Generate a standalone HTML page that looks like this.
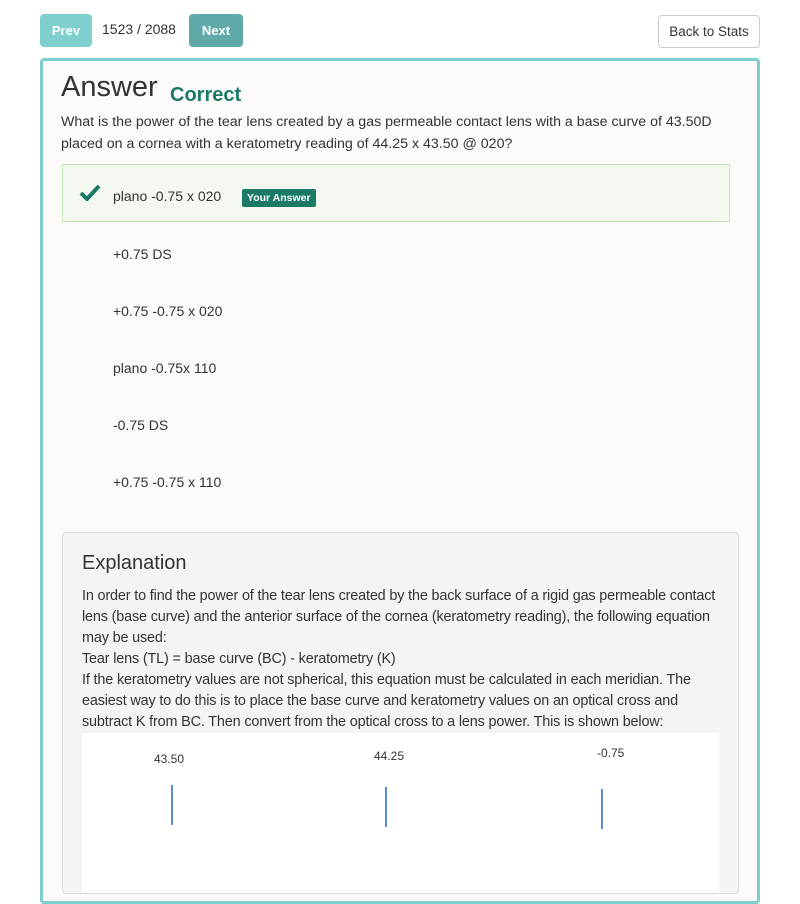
<!DOCTYPE html>
<html><head><style>
html,body{margin:0;width:800px;height:820px;overflow:hidden;background:#fff;font-family:"Liberation Sans",sans-serif;color:#333;}
.btn{position:absolute;border-radius:4px;font-size:13px;font-weight:bold;color:#fff;text-align:center;line-height:33px;}
.main{position:absolute;left:40px;top:58px;width:714px;height:840px;border:3px solid #7ccfcc;border-radius:4px;background:#fcfbf9;}
.a{position:absolute;font-size:14px;color:#333;white-space:nowrap;}
</style></head><body>
<div class="btn" style="left:40px;top:14px;width:52px;height:33px;background:#7fcfcf;">Prev</div>
<div class="a" style="left:102px;top:21px;font-size:14px;">1523 / 2088</div>
<div class="btn" style="left:189px;top:14px;width:54px;height:33px;background:#5fa9a8;">Next</div>
<div style="position:absolute;left:658px;top:15px;width:100px;height:31px;border:1px solid #ccc;border-radius:4px;font-size:13.5px;line-height:31px;text-align:center;color:#333;">Back to Stats</div>
<div class="main">
<div class="a" style="left:18px;top:10px;font-size:29px;color:#333;">Answer</div>
<div class="a" style="left:127px;top:23px;font-size:20px;font-weight:bold;color:#1a7a66;">Correct</div>
<div class="a" style="left:18px;top:50px;line-height:22px;font-size:14.2px;">What is the power of the tear lens created by a gas permeable contact lens with a base curve of 43.50D<br>placed on a cornea with a keratometry reading of 44.25 x 43.50 @ 020?</div>
<div style="position:absolute;left:19px;top:103px;width:666px;height:56px;background:#f3f9f0;border:1px solid #c6e6be;"></div>
<svg style="position:absolute;left:36px;top:123px" width="22" height="17" viewBox="0 0 22 17"><path d="M2 9 L8 15 L20 2" fill="none" stroke="#1a7a66" stroke-width="4"/></svg>
<div class="a" style="left:70px;top:127px;">plano -0.75 x 020</div>
<div style="position:absolute;left:199px;top:128px;height:18px;padding:0 5px;background:#1a7a66;color:#fff;font-size:10.5px;font-weight:bold;line-height:18px;border-radius:2px;">Your Answer</div>
<div class="a" style="left:70px;top:185px;">+0.75 DS</div>
<div class="a" style="left:70px;top:242px;">+0.75 -0.75 x 020</div>
<div class="a" style="left:70px;top:299px;">plano -0.75x 110</div>
<div class="a" style="left:70px;top:356px;">-0.75 DS</div>
<div class="a" style="left:70px;top:413px;">+0.75 -0.75 x 110</div>
<div style="position:absolute;left:19px;top:471px;width:675px;height:360px;background:#f4f4f4;border:1px solid #ddd;border-radius:4px;">
<div class="a" style="left:19px;top:19px;font-size:20px;">Explanation</div>
<div class="a" style="left:19px;top:53px;line-height:21px;font-size:14.4px;letter-spacing:-0.15px;">In order to find the power of the tear lens created by the back surface of a rigid gas permeable contact<br>lens (base curve) and the anterior surface of the cornea (keratometry reading), the following equation<br>may be used:<br>Tear lens (TL) = base curve (BC) - keratometry (K)<br>If the keratometry values are not spherical, this equation must be calculated in each meridian. The<br>easiest way to do this is to place the base curve and keratometry values on an optical cross and<br>subtract K from BC. Then convert from the optical cross to a lens power. This is shown below:</div>
<div style="position:absolute;left:19px;top:200px;width:637px;height:160px;background:#fff;">
<div class="a" style="left:72px;top:19px;font-size:12px;">43.50</div>
<div class="a" style="left:292px;top:16px;font-size:12px;">44.25</div>
<div class="a" style="left:515px;top:13px;font-size:12px;">-0.75</div>
<div style="position:absolute;left:89px;top:52px;width:2px;height:40px;background:#5b8ed0;"></div>
<div style="position:absolute;left:303px;top:54px;width:2px;height:40px;background:#5b8ed0;"></div>
<div style="position:absolute;left:519px;top:56px;width:2px;height:40px;background:#5b8ed0;"></div>
</div>
</div>
</div>
</body></html>
